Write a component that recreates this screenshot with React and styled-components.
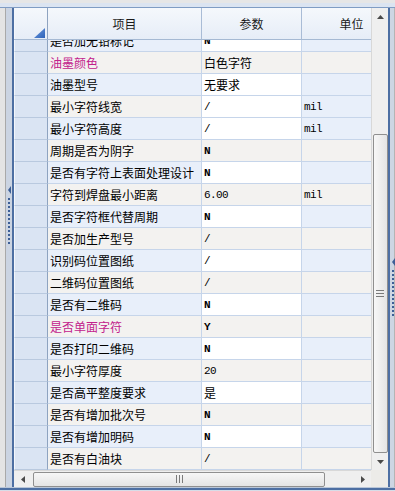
import styled, { createGlobalStyle } from "styled-components";

const GlobalStyle = createGlobalStyle`
  html, body {
    margin: 0;
    padding: 0;
    background: #e4e8ee;
  }
  body {
    font-family: "Noto Sans CJK SC", "Noto Sans", sans-serif;
    font-size: 12px;
    color: #000;
  }
`;

const rows = [
  { name: "是否加无铅标记", val: "N" },
  { name: "油墨颜色", val: "白色字符", hot: true },
  { name: "油墨型号", val: "无要求" },
  { name: "最小字符线宽", val: "/", unit: "mil", white: true },
  { name: "最小字符高度", val: "/", unit: "mil" },
  { name: "周期是否为阴字", val: "N" },
  { name: "是否有字符上表面处理设计", val: "N" },
  { name: "字符到焊盘最小距离", val: "6.00", unit: "mil" },
  { name: "是否字符框代替周期", val: "N" },
  { name: "是否加生产型号", val: "/" },
  { name: "识别码位置图纸", val: "/" },
  { name: "二维码位置图纸", val: "/" },
  { name: "是否有二维码", val: "N" },
  { name: "是否单面字符", val: "Y", hot: true },
  { name: "是否打印二维码", val: "N" },
  { name: "最小字符厚度", val: "20" },
  { name: "是否高平整度要求", val: "是" },
  { name: "是否有增加批次号", val: "N" },
  { name: "是否有增加明码", val: "N" },
  { name: "是否有白油块", val: "/" },
];

const Frame = styled.div`
  width: 395px;
  height: 491px;
  display: flex;
  flex-direction: column;
  overflow: hidden;
`;

const TopStrip = styled.div`
  height: 8px;
  flex: none;
  background: linear-gradient(to bottom, #e6e6e6 0, #e6e6e6 3px, #dbe4f1 3px, #dbe4f1 7px, #7f9cc4 7px);
`;

const Middle = styled.div`
  flex: 1;
  display: flex;
  min-height: 0;
`;

const BottomStrip = styled.div`
  height: 4px;
  flex: none;
  background: linear-gradient(to bottom, #b9c6d8 0, #b9c6d8 1px, #4d6fa3 1px, #4d6fa3 3px, #d6dde8 3px);
`;

const SideStrip = styled.div`
  width: ${(p) => p.$w}px;
  flex: none;
  display: flex;
  flex-direction: column;
  align-items: ${(p) => (p.$right ? "flex-end" : "flex-start")};
  background: ${(p) =>
    p.$right
      ? "linear-gradient(to right, #4d6fa3 0, #4d6fa3 2px, #cdd6e3 2px, #cdd6e3 6px, #b4b4b4 6px)"
      : "linear-gradient(to right, #e4e4e4 0, #e4e4e4 5px, #a9a9a9 5px, #a9a9a9 6px, #cbd4e2 6px, #cbd4e2 12px, #4d6fa3 12px)"};
`;

const Grip = styled.div`
  margin-top: ${(p) => p.$top}px;
  margin-left: ${(p) => p.$left}px;
  display: flex;
  flex-direction: column;
  align-items: center;
  gap: 2px;
  width: 4px;
`;

const GripArrow = styled.div`
  width: 0;
  height: 0;
  border-top: 4px solid transparent;
  border-bottom: 4px solid transparent;
  border-right: 3px solid #3d5f96;
  margin-bottom: 2px;
`;

const GripDot = styled.div`
  width: 2px;
  height: 2px;
  background: #3d5f96;
`;

const GridPanel = styled.div`
  flex: 1;
  display: flex;
  flex-direction: column;
  min-width: 0;
`;

const GridTop = styled.div`
  flex: 1;
  display: flex;
  min-height: 0;
`;

const Viewport = styled.div`
  width: 357px;
  flex: none;
  display: flex;
  flex-direction: column;
  overflow: hidden;
  background: #fff;
`;

const Columns = "34px 154px 100px 100px";

const HeaderRow = styled.div`
  display: grid;
  grid-template-columns: ${Columns};
  height: 32px;
  flex: none;
  background: linear-gradient(to bottom, #f5f8fc, #e6edf7);
  border-bottom: 1px solid #a5b9d3;
  box-sizing: border-box;
`;

const HeaderCell = styled.div`
  display: flex;
  align-items: center;
  justify-content: center;
  border-right: 1px solid #a9bcd6;
  font-size: 12px;
  color: #1a1a1a;
`;

const CornerCell = styled(HeaderCell)`
  align-items: flex-end;
  justify-content: flex-end;
  padding: 0 2px 1px 0;
  border-left: 1px solid #f4f7fb;
  border-right-color: #8ea3c0;
`;

const Body = styled.div`
  flex: 1;
  overflow: hidden;
`;

const BodyInner = styled.div`
  margin-top: -10px;
`;

const Row = styled.div`
  display: grid;
  grid-template-columns: ${Columns};
  height: 22px;
`;

const RowHead = styled.div`
  background: #dae4f3;
  border-left: 1px solid #f4f7fb;
  border-right: 1px solid #8ea3c0;
  border-bottom: 1px solid #b9c9df;
`;

const Cell = styled.div`
  display: flex;
  align-items: center;
  padding-left: ${(p) => p.$pad}px;
  background: ${(p) => p.$bg};
  border-right: 1px solid #c6d5ea;
  border-bottom: 1px solid #c6d5ea;
  color: ${(p) => (p.$hot ? "#c2208c" : "#000")};
  font-size: 12px;
  white-space: nowrap;
  overflow: hidden;
`;

const Mono = styled.span`
  font-family: "Liberation Mono", "DejaVu Sans Mono", monospace;
  font-size: 11px;
  letter-spacing: -0.6px;
  ${(p) => p.$bold && "font-weight: bold;"}
`;

const VScroll = styled.div`
  width: 17px;
  flex: none;
  display: flex;
  flex-direction: column;
  background: #efefef;
  border-left: 1px solid #d8d8d8;
  box-sizing: border-box;
`;

const ArrowButton = styled.div`
  width: 17px;
  height: 17px;
  flex: none;
  display: flex;
  align-items: center;
  justify-content: center;
`;

const VTrack = styled.div`
  flex: 1;
  display: flex;
  flex-direction: column;
  justify-content: flex-end;
  align-items: center;
`;

const VThumb = styled.div`
  width: 15px;
  height: 319px;
  box-sizing: border-box;
  border: 1px solid #8f8f8f;
  border-radius: 2px;
  background: linear-gradient(to right, #f7f7f7, #e4e4e4);
  display: flex;
  flex-direction: column;
  align-items: center;
  justify-content: center;
  gap: 2px;
`;

const HLine = styled.div`
  width: 8px;
  height: 1px;
  background: #7a7a7a;
`;

const GridBottom = styled.div`
  height: 17px;
  flex: none;
  display: flex;
`;

const HScroll = styled.div`
  width: 357px;
  flex: none;
  display: flex;
  background: #efefef;
  border-top: 1px solid #d8d8d8;
  box-sizing: border-box;
`;

const HTrack = styled.div`
  flex: 1;
  display: flex;
  align-items: center;
  padding-left: 2px;
`;

const HThumb = styled.div`
  width: 292px;
  height: 15px;
  box-sizing: border-box;
  border: 1px solid #8f8f8f;
  border-radius: 2px;
  background: linear-gradient(to bottom, #f7f7f7, #e4e4e4);
  display: flex;
  align-items: center;
  justify-content: center;
  gap: 2px;
`;

const VLine = styled.div`
  width: 1px;
  height: 8px;
  background: #7a7a7a;
`;

const Corner = styled.div`
  width: 17px;
  flex: none;
  background: #ecebe8;
`;

const Arrow = ({ dir }) => {
  const pts = {
    up: "0,4 3.5,0 7,4",
    down: "0,0 7,0 3.5,4",
    left: "4,0 4,7 0,3.5",
    right: "0,0 0,7 4,3.5",
  }[dir];
  const vertical = dir === "up" || dir === "down";
  return (
    <svg width={vertical ? 7 : 4} height={vertical ? 4 : 7} viewBox={vertical ? "0 0 7 4" : "0 0 4 7"}>
      <polygon points={pts} fill="#4a4a4a" />
    </svg>
  );
};

const isAscii = (s) => /^[\x00-\x7f]+$/.test(s);

const Value = ({ text }) =>
  isAscii(text) ? <Mono $bold={text === "N" || text === "Y"}>{text}</Mono> : text;

export default function App() {
  return (
    <>
      <GlobalStyle />
      <Frame>
        <TopStrip />
        <Middle>
          <SideStrip $w={14}>
            <Grip $top={178} $left={7}>
              <GripArrow />
              {Array.from({ length: 12 }).map((_, i) => (
                <GripDot key={i} />
              ))}
            </Grip>
          </SideStrip>
          <GridPanel>
            <GridTop>
              <Viewport>
                <HeaderRow>
                  <CornerCell>
                    <svg width="11" height="10" viewBox="0 0 11 10">
                      <defs>
                        <linearGradient id="tri" x1="0" y1="0" x2="1" y2="1">
                          <stop offset="0" stopColor="#6d9be0" />
                          <stop offset="1" stopColor="#2f63b8" />
                        </linearGradient>
                      </defs>
                      <polygon points="0,10 11,0 11,10" fill="url(#tri)" />
                    </svg>
                  </CornerCell>
                  <HeaderCell>项目</HeaderCell>
                  <HeaderCell>参数</HeaderCell>
                  <HeaderCell>单位</HeaderCell>
                </HeaderRow>
                <Body>
                  <BodyInner>
                    {rows.map((r, i) => {
                      const blue = i % 2 === 0;
                      const bg = blue ? "#e8effa" : "#f3f2f0";
                      return (
                        <Row key={r.name}>
                          <RowHead />
                          <Cell $bg={bg} $pad={2} $hot={r.hot}>
                            {r.name}
                          </Cell>
                          <Cell $bg={blue || r.white ? "#ffffff" : bg} $pad={2}>
                            <Value text={r.val} />
                          </Cell>
                          <Cell $bg={r.white ? "#e8effa" : bg} $pad={2}>
                            {r.unit && <Value text={r.unit} />}
                          </Cell>
                        </Row>
                      );
                    })}
                  </BodyInner>
                </Body>
              </Viewport>
              <VScroll>
                <ArrowButton>
                  <Arrow dir="up" />
                </ArrowButton>
                <VTrack>
                  <VThumb>
                    <HLine />
                    <HLine />
                    <HLine />
                  </VThumb>
                </VTrack>
                <ArrowButton>
                  <Arrow dir="down" />
                </ArrowButton>
              </VScroll>
            </GridTop>
            <GridBottom>
              <HScroll>
                <ArrowButton>
                  <Arrow dir="left" />
                </ArrowButton>
                <HTrack>
                  <HThumb>
                    <VLine />
                    <VLine />
                    <VLine />
                  </HThumb>
                </HTrack>
                <ArrowButton>
                  <Arrow dir="right" />
                </ArrowButton>
              </HScroll>
              <Corner />
            </GridBottom>
          </GridPanel>
          <SideStrip $w={7} $right>
            <Grip $top={250} $left={0}>
              <GripArrow />
              {Array.from({ length: 12 }).map((_, i) => (
                <GripDot key={i} />
              ))}
            </Grip>
          </SideStrip>
        </Middle>
        <BottomStrip />
      </Frame>
    </>
  );
}
